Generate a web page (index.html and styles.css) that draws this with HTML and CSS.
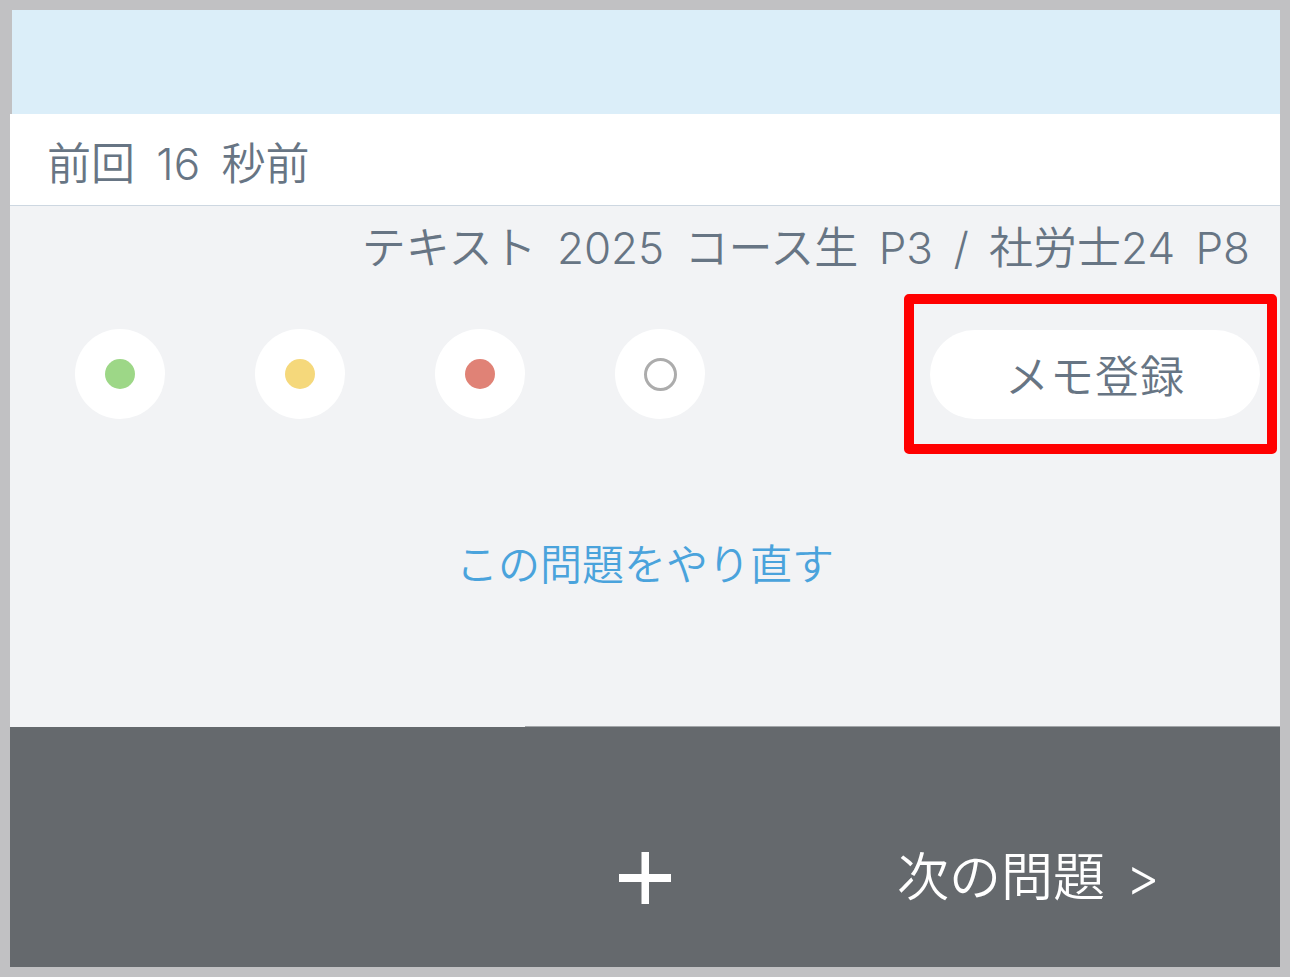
FILE: index.html
```html
<!DOCTYPE html>
<html lang="ja">
<head>
<meta charset="utf-8">
<title>問題</title>
<link rel="stylesheet" href="styles.css">
</head>
<body>
<div class="frame">
  <div class="band"></div>
  <div class="last-row">前回 16 秒前</div>
  <div class="main">
    <div class="source">テキスト 2025 コース生 P3 / 社労士24 P8</div>
    <div class="controls">
      <div class="marks">
        <button class="mark"><span class="dot dot-green"></span></button>
        <button class="mark"><span class="dot dot-yellow"></span></button>
        <button class="mark"><span class="dot dot-red"></span></button>
        <button class="mark"><span class="dot dot-empty"></span></button>
      </div>
      <div class="memo-wrap">
        <button class="memo">メモ登録</button>
        <span class="highlight"></span>
      </div>
    </div>
    <div class="retry">この問題をやり直す</div>
  </div>
  <div class="footer">
    <div class="spacer"></div>
    <svg class="plus" width="52" height="52" viewBox="0 0 52 52" aria-label="追加">
      <rect x="22.5" y="0" width="7.5" height="52" fill="#ffffff"/>
      <rect x="0" y="22" width="52" height="8" fill="#ffffff"/>
    </svg>
    <div class="next">次の問題 &gt;</div>
  </div>
</div>
</body>
</html>
```

FILE: styles.css
```css
html, body {
  margin: 0;
  padding: 0;
}
body {
  background: #c1c1c3;
  font-family: "Inter", "Noto Sans CJK JP", sans-serif;
  font-weight: 350;
  color: #677584;
}
.frame {
  margin: 10px;
  width: 1270px;
  height: 957px;
  display: flex;
  flex-direction: column;
  overflow: hidden;
}
.band {
  height: 104px;
  background: #dbeef9;
  margin-left: 2px;
  flex: none;
}
.last-row {
  flex: none;
  background: #ffffff;
  border-bottom: 1px solid #cdd7e1;
  box-sizing: border-box;
  height: 92px;
  display: flex;
  align-items: center;
  padding: 8px 0 0 37px;
  font-size: 44px;
  line-height: 50px;
  word-spacing: 9px;
}
.main {
  background: #f2f3f5;
  height: 521px;
  flex: none;
  display: flex;
  flex-direction: column;
}
.source {
  margin-top: 17px;
  text-align: right;
  padding-right: 30px;
  font-size: 44px;
  line-height: 50px;
  word-spacing: 8px;
}
.controls {
  margin-top: 56px;
  display: flex;
  align-items: center;
  padding: 0 20px 0 65px;
}
.marks {
  display: flex;
  gap: 90px;
}
.mark {
  width: 90px;
  height: 90px;
  border-radius: 50%;
  border: none;
  background: #ffffff;
  padding: 0;
  display: flex;
  align-items: center;
  justify-content: center;
}
.dot {
  width: 30px;
  height: 30px;
  border-radius: 50%;
  display: block;
}
.dot-green { background: #9dd787; }
.dot-yellow { background: #f5d87b; }
.dot-red { background: #e08276; }
.dot-empty {
  width: 33px;
  height: 33px;
  box-sizing: border-box;
  border: 3px solid #acacac;
}
.memo-wrap {
  margin-left: auto;
  position: relative;
}
.memo {
  width: 330px;
  height: 89px;
  border-radius: 45px;
  border: none;
  background: #ffffff;
  font-family: inherit;
  font-weight: inherit;
  font-size: 44px;
  color: #677584;
  letter-spacing: 1px;
  padding: 0;
  display: block;
}
.highlight {
  position: absolute;
  left: -26px;
  top: -36px;
  right: -17px;
  bottom: -35px;
  border: 10px solid #ff0000;
  border-radius: 5px;
  pointer-events: none;
}
.retry {
  margin-top: 121px;
  text-align: center;
  color: #4aa3dc;
  font-size: 42px;
  line-height: 50px;
}
.footer {
  flex: 1;
  background: #65696d;
  position: relative;
  display: grid;
  grid-template-columns: 1fr 52px 1fr;
  align-items: center;
  padding-top: 61px;
}
.footer::before {
  content: "";
  position: absolute;
  top: -1px;
  left: 515px;
  right: 0;
  height: 1px;
  background: #a3a6a9;
}
.plus {
  display: block;
}
.next {
  justify-self: start;
  margin-left: 226px;
  color: #ffffff;
  font-size: 52px;
  line-height: 60px;
  white-space: nowrap;
  word-spacing: 6px;
}
```
